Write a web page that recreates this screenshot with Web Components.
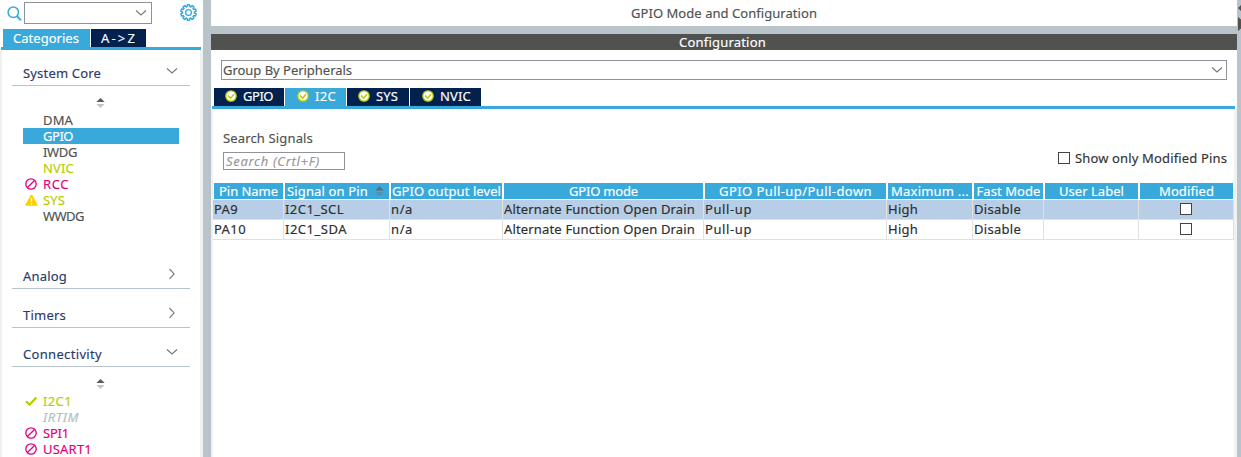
<!DOCTYPE html>
<html lang="en">
<head>
<meta charset="utf-8">
<title>GPIO Mode and Configuration</title>
<style>
html,body{margin:0;height:100%;overflow:hidden}
body{font:13px/16px "Noto Sans","Open Sans",sans-serif;color:#4f5251;background:#fff}
</style>
</head>
<body>
<config-app></config-app>
<script>
function define(name, html, setup) {
  const t = document.createElement('template');
  t.innerHTML = html;
  customElements.define(name, class extends HTMLElement {
    connectedCallback() {
      if (this.shadowRoot) return;
      const r = this.attachShadow({mode: 'open'});
      r.append(t.content.cloneNode(true));
      if (setup) setup(this, r);
    }
  });
}

/* Label whose tracking is tuned so that it takes the width given in "w". */
define('fit-text', `<style>:host{display:inline-block;white-space:pre;flex:none}span{display:inline-block;-webkit-text-stroke:.15px currentColor}</style><span></span>`, (el, r) => {
  const s = r.querySelector('span'), txt = el.getAttribute('text'), w = +el.getAttribute('w');
  s.textContent = txt;
  if (w) {
    const n = s.getBoundingClientRect().width;
    s.style.letterSpacing = ((w - n) / txt.length) + 'px';
    el.style.width = w + 'px';
  }
});

const teeth = Array.from({length: 10}, (_, i) => {
  const p = (r, a) => { const t = (i * 36 + a) * Math.PI / 180; return (8.5 + r * Math.sin(t)).toFixed(2) + ' ' + (8.5 - r * Math.cos(t)).toFixed(2); };
  return `${i ? 'L' : 'M'}${p(6, -13)}L${p(7.8, -8)}L${p(7.8, 8)}L${p(6, 13)}`;
}).join('') + 'z';

const icons = {
  search: [16, 16, '<circle cx="6.3" cy="6.3" r="5.2" fill="none" stroke="#39a9dc" stroke-width="1.5"/><path d="M9.8 10l4.2 4.400" stroke="#39a9dc" stroke-width="2"/>'],
  gear: [17, 17, `<path d="${teeth}" fill="none" stroke="#39a9dc" stroke-width="1.5" stroke-linejoin="round"/><circle cx="8.5" cy="8.5" r="2.9" fill="none" stroke="#39a9dc" stroke-width="1.3"/>`],
  down: [12, 8, '<path d="M1 1.500l5 4.500 5-4.500" fill="none" stroke="#777" stroke-width="1.1"/>'],
  right: [8, 12, '<path d="M1.500 1l4.600 4.900-4.600 4.900" fill="none" stroke="#777" stroke-width="1.1"/>'],
  sort: [9, 10, '<path d="M.3 4L4.500 0l4.200 4z" fill="#5a5a5a"/><path d="M.3 6h8.400L4.500 10z" fill="#c4c4c4"/>'],
  hsort: [9, 10, '<path d="M.3 4.500L4.500.2l4.200 4.300z" fill="#66696b"/><path d="M.3 6h8.400L4.500 10z" fill="#5590ad"/>'],
  ban: [12, 12, '<circle cx="6" cy="6" r="5.200" fill="none" stroke="#e0007f" stroke-width="1.300"/><path d="M2.500 9.500l7-7" stroke="#e0007f" stroke-width="1.300"/>'],
  warn: [13, 12, '<path d="M6.500 1.200L12 11H1z" fill="#ffd000" stroke="#ffd000" stroke-width="1.500" stroke-linejoin="round"/><path d="M6.500 4v4M6.500 9v1.400" stroke="#fff" stroke-width="1.300"/>'],
  check: [12, 12, '<path d="M1 6.300l3.500 3.400L11.300 2.500" fill="none" stroke="#b9cc00" stroke-width="2.300"/>'],
  ok: [12, 12, '<circle cx="6" cy="6" r="5.200" fill="#fff" stroke="#b9cc00" stroke-width="1.300"/><path d="M3 5.500l2.600 2.700L9 4.300" fill="none" stroke="#b9cc00" stroke-width="1.500"/>']
};
define('ui-icon', `<style>:host{display:block;flex:none}svg{display:block}</style>`, (el, r) => {
  const [w, h, p] = icons[el.getAttribute('name')];
  r.innerHTML += `<svg width="${w}" height="${h}" viewBox="0 0 ${w} ${h}">${p}</svg>`;
});

define('combo-box', `<style>
:host{display:flex;align-items:center;justify-content:space-between;box-sizing:border-box;border:1px solid #8d9399;background:#fff;padding:0 4px 0 1px}
</style><span><slot></slot></span><ui-icon name="down"></ui-icon>`);

define('check-box', `<style>:host{display:block;flex:none;width:12px;height:12px;box-sizing:border-box;border:1px solid #444;background:#fff}</style>`);

define('tab-item', `<style>
:host{display:flex;align-items:center;box-sizing:border-box;height:18px;padding-bottom:2px;background:#03214f;color:#fff}
:host([active]){background:#39a9dc}
::slotted(ui-icon){margin-right:6px}
</style><slot></slot>`);

define('tab-bar', `<style>
:host{display:flex;gap:1px;border-bottom:3px solid #39a9dc;box-sizing:border-box;height:21px}
</style><slot></slot>`);

define('category-group', `<style>
:host{display:block}
header{display:flex;justify-content:space-between;align-items:center;box-sizing:border-box;height:36px;margin:0 10px;padding:11px 12px 0 11px;border-bottom:1px solid #b9c4ca;color:#2a3b6b}
:host(:not([first])) header{height:39px;padding-top:14px}
header ui-icon{margin-top:-4px}
header ui-icon[name=right]{margin:-4px 2px 0 0}
.body{padding-top:12px}
.sort{display:flex;justify-content:center;height:14px;padding-right:2px}
:host(:not([open])) .body{display:none}
</style><header></header><div class="body"><div class="sort"><ui-icon name="sort"></ui-icon></div><slot></slot></div>`, (el, r) => {
  r.querySelector('header').innerHTML = `<fit-text text="${el.getAttribute('label')}" w="${el.getAttribute('w')}"></fit-text><ui-icon name="${el.hasAttribute('open') ? 'down' : 'right'}"></ui-icon>`;
});

define('peripheral-item', `<style>
:host{display:flex;align-items:center;height:16px;margin:0 21px;box-sizing:border-box}
:host([kind=green]){color:#b9cc00}:host([kind=pink]){color:#e0007f}
:host([kind=off]){color:#b3bec5;font-style:italic}
:host([kind=selected]){background:#39a9dc;color:#fff}
.i{width:18px;padding-left:2px;box-sizing:border-box;flex:none}
.l{width:0;flex:none;margin-left:2px}
</style><div class="i"></div><div class="l"></div>`, (el, r) => {
  const ic = el.getAttribute('icon');
  if (ic) r.querySelector('.i').innerHTML = `<ui-icon name="${ic}"></ui-icon>`;
  r.querySelector('.l').innerHTML = `<fit-text text="${el.getAttribute('label')}" w="${el.getAttribute('w')}"></fit-text>`;
});

define('side-panel', `<style>
:host{display:flex;flex-direction:column;width:203px;flex:none;background:#fff}
.tools{display:flex;height:29px;box-sizing:border-box;padding:2px 6px 0 7px}
.tools combo-box{width:128px;height:22px;margin-left:1px}
.tools ui-icon[name=search]{margin-top:4px}
.tools ui-icon[name=gear]{margin:2px 0 0 auto}
tab-bar{margin:0 2px 0 1px;padding-left:2px}
tab-item{padding-bottom:1px}
.a{width:87px;padding-left:10px}.b{width:55px;padding-left:10px}
.list{flex:1;border:solid #f0f0f0;border-width:0 3px 0 2px;overflow:hidden;min-height:0}
.core{min-height:200px}
</style>
<div class="tools"><ui-icon name="search"></ui-icon><combo-box></combo-box><ui-icon name="gear"></ui-icon></div>
<tab-bar><tab-item active class="a"><fit-text text="Categories" w="66"></fit-text></tab-item><tab-item class="b"><fit-text text="A-&gt;Z" w="36"></fit-text></tab-item></tab-bar>
<div class="list">
<category-group class="core" first open label="System Core" w="78">
<peripheral-item label="DMA" w="30"></peripheral-item>
<peripheral-item label="GPIO" w="30" kind="selected"></peripheral-item>
<peripheral-item label="IWDG" w="34"></peripheral-item>
<peripheral-item label="NVIC" w="31" kind="green"></peripheral-item>
<peripheral-item label="RCC" w="26" kind="pink" icon="ban"></peripheral-item>
<peripheral-item label="SYS" w="22" kind="green" icon="warn"></peripheral-item>
<peripheral-item label="WWDG" w="41"></peripheral-item>
</category-group>
<category-group label="Analog" w="44"></category-group>
<category-group label="Timers" w="43"></category-group>
<category-group label="Connectivity" w="79" open>
<peripheral-item label="I2C1" w="29" kind="green" icon="check"></peripheral-item>
<peripheral-item label="IRTIM" w="36" kind="off"></peripheral-item>
<peripheral-item label="SPI1" w="26" kind="pink" icon="ban"></peripheral-item>
<peripheral-item label="USART1" w="49" kind="pink" icon="ban"></peripheral-item>
</category-group>
</div>`);

define('pin-table', `<style>
:host{display:block;width:1021px}
.row{display:grid;grid-template-columns:71px 106px 113px 201px 183px 86px 71px 95px 95px;height:20px;color:#2b2d2e}
.row>div{display:flex;align-items:center;box-sizing:border-box;border:solid #dfe1e3;border-width:0 1px 1px 0;padding:0 0 2px 1px;overflow:hidden;white-space:nowrap}
.row.sel>div{background:#b8cee6}
.row.head{height:17px;color:#fff}
.row.head>div{background:#39a9dc;border-color:#fff;border-width:0 1px 1px 1px;justify-content:center;padding:0}
.row.head>div:nth-child(2){justify-content:flex-start;padding-left:2px}
.head ui-icon{margin:0 0 1px 7px}
.row>div:last-child{justify-content:center;padding-left:0}
</style><div class="t"></div>`, (el, r) => {
  const f = ([t, w]) => t ? `<fit-text text="${t}" w="${w}"></fit-text>` : '';
  const head = [['Pin Name',59],['Signal on Pin',81],['GPIO output level',109],['GPIO mode',69],['GPIO Pull-up/Pull-down',153],['Maximum ...',78],['Fast Mode',64],['User Label',65],['Modified',55]];
  const tail = [['n/a',22],['Alternate Function Open Drain',191],['Pull-up',47],['High',30],['Disable',47],['']];
  const rows = [[['PA9',24],['I2C1_SCL',59],...tail],[['PA10',32],['I2C1_SDA',62],...tail]];
  r.querySelector('.t').innerHTML = `<div class="row head">${head.map((h,i)=>`<div>${f(h)}${i==1?'<ui-icon name="hsort"></ui-icon>':''}</div>`).join('')}</div>` +
    rows.map((c,i)=>`<div class="row ${i?'':'sel'}">${c.map(x=>`<div>${f(x)}</div>`).join('')}<div><check-box></check-box></div></div>`).join('');
});

define('main-panel', `<style>
:host{display:flex;flex-direction:column;flex:1;min-width:0;background:#fff}
.title{height:26px;display:flex;align-items:center;justify-content:center}
.split{height:8px;background:#b9c4ca}
.bar{height:16px;background:#505250;color:#fff;display:flex;align-items:center;justify-content:center;padding-right:3px}
.group{margin:10px 10px 8px;height:20px;padding-right:3px}
tab-bar{margin:0 2px 0 1px;padding-left:2px}
tab-item{padding-left:11px}
.content{flex:1;border:solid #eff1f3;border-width:0 3px 0 2px;display:flex;flex-direction:column}
.search{display:flex;justify-content:space-between;height:74px;box-sizing:border-box;padding:21px 7px 0 10px}
.field{box-sizing:border-box;width:122px;height:18px;border:1px solid #8d9399;margin-top:6px;color:#999;font-style:italic;padding-left:2px;line-height:16px}
.only{display:flex;gap:5px;margin-top:20px;height:16px;align-items:center;color:#333}
.search>div:first-child{display:flex;flex-direction:column}
</style>
<div class="title"><fit-text text="GPIO Mode and Configuration" w="186"></fit-text></div>
<div class="split"></div>
<div class="bar"><fit-text text="Configuration" w="87"></fit-text></div>
<combo-box class="group"><fit-text text="Group By Peripherals" w="129"></fit-text></combo-box>
<tab-bar>
<tab-item style="width:70px"><ui-icon name="ok"></ui-icon><fit-text text="GPIO" w="30"></fit-text></tab-item>
<tab-item active style="width:61px;padding-left:12px"><ui-icon name="ok"></ui-icon><fit-text text="I2C" w="21"></fit-text></tab-item>
<tab-item style="width:62px"><ui-icon name="ok"></ui-icon><fit-text text="SYS" w="22"></fit-text></tab-item>
<tab-item style="width:71px;padding-left:12px"><ui-icon name="ok"></ui-icon><fit-text text="NVIC" w="31"></fit-text></tab-item>
</tab-bar>
<div class="content">
<div class="search"><div><fit-text text="Search Signals" w="90"></fit-text><div class="field"><fit-text text="Search (Crtl+F)" w="94"></fit-text></div></div>
<div class="only"><check-box></check-box><fit-text text="Show only Modified Pins" w="152"></fit-text></div></div>
<pin-table></pin-table>
</div>`);

define('edge-bar', `<style>:host{display:block;width:4px;flex:none;background:#b9c4ca}svg{display:block}</style>
<svg width="4" height="34"><path d="M4 5v6L1 8zM1 17l3 2.500v9L1 31z" fill="#505250"/></svg>`);

define('config-app', `<style>
:host{display:flex;width:1241px;height:457px;overflow:hidden}
.split{width:8px;flex:none;background:#b9c4ca}
</style><side-panel></side-panel><div class="split"></div><main-panel></main-panel><edge-bar></edge-bar>`);
</script>
</body>
</html>
